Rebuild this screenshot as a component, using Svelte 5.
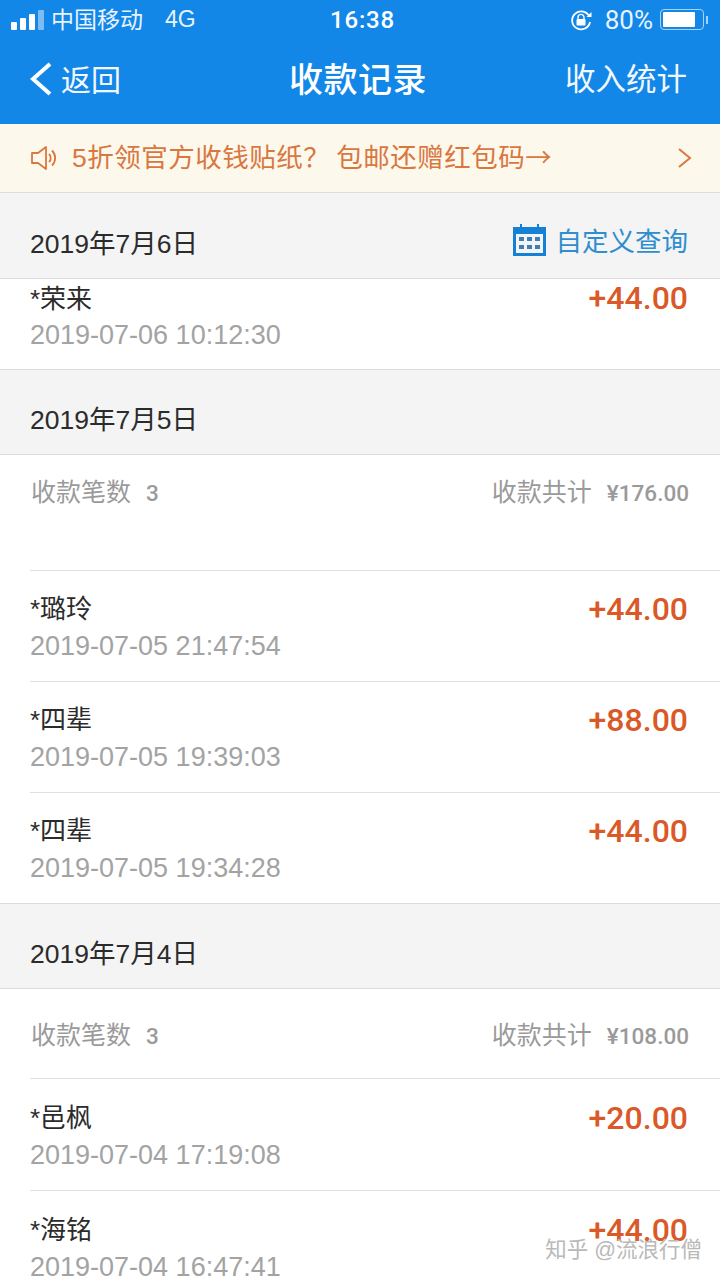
<script>
	const sections = [
		{
			date: '2019年7月6日',
			first: true,
			rows: [{ name: '*荣来', time: '2019-07-06 10:12:30', amount: '+44.00', cut: true }]
		},
		{
			date: '2019年7月5日',
			count: 3,
			total: '¥176.00',
			tall: true,
			rows: [
				{ name: '*璐玲', time: '2019-07-05 21:47:54', amount: '+44.00' },
				{ name: '*四辈', time: '2019-07-05 19:39:03', amount: '+88.00' },
				{ name: '*四辈', time: '2019-07-05 19:34:28', amount: '+44.00' }
			]
		},
		{
			date: '2019年7月4日',
			count: 3,
			total: '¥108.00',
			loose: true,
			rows: [
				{ name: '*邑枫', time: '2019-07-04 17:19:08', amount: '+20.00' },
				{ name: '*海铭', time: '2019-07-04 16:47:41', amount: '+44.00' }
			]
		}
	];
</script>

<div class="page">
	<header class="top">
		<div class="status">
			<div class="carrier">
				<span class="signal"><i></i><i></i><i></i><i class="off"></i></span>
				<span class="isp">中国移动</span>
				<span class="net">4G</span>
			</div>
			<div class="clock">16:38</div>
			<div class="power">
				<svg width="22" height="22" viewBox="0 0 22 22" fill="none" stroke="#fff">
					<path d="M19.500 8A9 9 0 1 0 20 13" stroke-width="1.8" />
					<path d="M16.500 8h5V3" fill="#fff" stroke="none" />
					<path d="M8 10V8.400a3 3 0 0 1 6 0V10" stroke-width="1.400" />
					<rect x="6.500" y="10" width="9" height="6.500" rx="1" fill="#fff" stroke="none" />
				</svg>
				<span class="pct">80%</span>
				<span class="battery"><b></b></span>
				<span class="nub"></span>
			</div>
		</div>
		<nav class="nav">
			<div class="back">
				<svg width="24" height="34" viewBox="0 0 24 34" fill="none" stroke="#fff" stroke-width="4">
					<path d="M21 2 4 17l17 15" />
				</svg>
				<span>返回</span>
			</div>
			<div class="title">收款记录</div>
			<div class="stats">收入统计</div>
		</nav>
	</header>

	<div class="notice">
		<svg width="28" height="28" viewBox="0 0 28 28" fill="none" stroke="#d9773f" stroke-width="1.800">
			<path d="M2 9h6l8-6v22l-8-6H2z" stroke-linejoin="round" />
			<path d="M19 10a5.500 5.500 0 0 1 0 8" />
			<path d="M22 6.500a10.500 10.500 0 0 1 0 15" />
		</svg>
		<span class="notice-text">5折领官方收钱贴纸<span class="ask">？</span>包邮还赠红包码<span class="arrow">→</span></span>
		<svg class="chev" width="16" height="22" viewBox="0 0 16 22" fill="none" stroke="#d9773f" stroke-width="2">
			<path d="m2 2 11 9-11 9" />
		</svg>
	</div>

	{#each sections as s}
		<section>
			<div class="day" class:first={s.first}>
				<span>{s.date}</span>
				{#if s.first}
					<div class="query">
						<svg width="33" height="32" viewBox="0 0 33 32">
							<path fill="#1581d6" d="M0 3h7V0h2v3h15V0h2v3h7v29H0z" />
							<rect x="3" y="10" width="27" height="19" fill="#f4f4f4" />
							<g fill="#3f7fb8">
								<rect x="6" y="13" width="5" height="4" /><rect x="14" y="13" width="5" height="4" /><rect x="22" y="13" width="5" height="4" />
								<rect x="6" y="21" width="5" height="4" /><rect x="14" y="21" width="5" height="4" /><rect x="22" y="21" width="5" height="4" />
							</g>
						</svg>
						<span class="query-text">自定义查询</span>
					</div>
				{/if}
			</div>
			<div class="list">
				{#if s.count}
					<div class="summary" class:tall={s.tall}>
						<span>收款笔数<em class="num">{s.count}</em></span>
						<span>收款共计<em class="num">{s.total}</em></span>
					</div>
				{/if}
				{#each s.rows as r}
					<div class="row" class:cut={r.cut} class:loose={s.loose}>
						<div class="who">
							<div class="name">{r.name}</div>
							<div class="time">{r.time}</div>
						</div>
						<div class="amount">{r.amount}</div>
					</div>
				{/each}
			</div>
		</section>
	{/each}

	<div class="mark">知乎 @流浪行僧</div>
</div>

<style>
	:global(body) {
		margin: 0;
		background: #fff;
	}
	.page {
		position: relative;
		width: 720px;
		height: 1281px;
		overflow: hidden;
		font-family: 'Liberation Sans', 'Noto Sans CJK SC', sans-serif;
		color: #2b2b2b;
	}
	.top {
		height: 124px;
		background: #1287e8;
		color: #fff;
	}
	.status {
		height: 39px;
		display: grid;
		grid-template-columns: 1fr auto 1fr;
		align-items: center;
		padding: 0 12px 0 11px;
		font-size: 23px;
		color: #e8f3fd;
	}
	.carrier {
		display: flex;
		align-items: center;
		gap: 6px;
	}
	.isp {
		margin-top: -3px;
	}
	.net {
		margin-left: 16px;
	}
	.signal {
		display: flex;
		align-items: flex-end;
		gap: 3px;
		height: 20px;
		margin-right: 1px;
	}
	.signal i {
		width: 6px;
		background: #fff;
		border-radius: 1px;
		height: 8px;
	}
	.signal i:nth-child(2) {
		height: 12px;
	}
	.signal i:nth-child(3) {
		height: 16px;
	}
	.signal i.off {
		height: 20px;
		background: #7cbcf2;
	}
	.clock {
		margin-left: 6px;
		font-size: 24px;
		font-weight: 500;
		letter-spacing: 0.8px;
		color: #fff;
		font-family: Roboto, sans-serif;
	}
	.power {
		display: flex;
		align-items: center;
		justify-content: flex-end;
	}
	.pct {
		margin-left: 13px;
		font-size: 26px;
		font-family: Roboto, sans-serif;
	}
	.battery {
		box-sizing: border-box;
		width: 44px;
		height: 21px;
		margin-left: 7px;
		border: 1px solid #a6d3f7;
		border-radius: 4px;
		padding: 2px;
		display: block;
	}
	.battery b {
		display: block;
		width: 32px;
		height: 100%;
		background: #fff;
		border-radius: 1px;
	}
	.nub {
		width: 2px;
		height: 8px;
		margin-left: 2px;
		background: #a6d3f7;
	}
	.nav {
		height: 85px;
		display: grid;
		grid-template-columns: 1fr auto 1fr;
		align-items: center;
		padding: 0 33px 8px 29px;
		box-sizing: border-box;
	}
	.back {
		display: flex;
		align-items: center;
		gap: 8px;
		font-size: 30px;
		color: #f2f8fe;
	}
	.back svg {
		margin-top: 3px;
	}
	.title {
		font-size: 34px;
		font-weight: 500;
		letter-spacing: 0.5px;
	}
	.stats {
		text-align: right;
		font-size: 30.500px;
		color: #f2f8fe;
		margin-top: -2px;
	}
	.notice {
		height: 69px;
		box-sizing: border-box;
		display: flex;
		align-items: center;
		padding: 0 27px 0 30px;
		background: #fdf8ec;
		border-bottom: 1px solid #dddddd;
		color: #d9773f;
	}
	.notice-text {
		flex: 1;
		margin: -5px 0 0 14px;
		font-size: 26.500px;
		letter-spacing: 0.5px;
	}
	.ask {
		margin-right: 6px;
	}
	.arrow {
		font-family: 'Noto Sans CJK SC', sans-serif;
	}
	.day {
		height: 85px;
		box-sizing: border-box;
		display: flex;
		align-items: center;
		justify-content: space-between;
		padding: 11px 32px 0 30px;
		background: #f4f4f4;
		border-bottom: 1px solid #dcdcdc;
		font-size: 26.500px;
	}
	.day.first {
		height: 86px;
	}
	.query {
		display: flex;
		align-items: center;
		gap: 10px;
		color: #2f8ecf;
		margin-top: -2px;
	}
	.query-text {
		margin-top: -2px;
	}
	.list {
		background: #fff;
		border-bottom: 1px solid #dcdcdc;
	}
	.summary {
		height: 90px;
		box-sizing: border-box;
		margin-left: 30px;
		padding: 0 31px 2px 1px;
		display: flex;
		justify-content: space-between;
		align-items: center;
		border-bottom: 1px solid #e0e0e0;
		font-size: 25px;
		color: #9a9a9a;
	}
	.summary.tall {
		height: 116px;
		padding-bottom: 46px;
	}
	.num {
		margin-left: 15px;
		font-family: Roboto, sans-serif;
		font-style: normal;
		font-size: 22.500px;
		font-weight: 500;
		color: #9a9a9a;
	}
	.row {
		height: 111px;
		box-sizing: border-box;
		margin-left: 30px;
		padding: 20px 32px 0 0;
		display: flex;
		justify-content: space-between;
		align-items: flex-start;
		border-bottom: 1px solid #e0e0e0;
	}
	.row:last-child {
		height: 110px;
		border-bottom: 0;
	}
	.row.loose {
		height: 112px;
		padding-top: 21px;
	}
	.row.cut {
		height: 90px;
		padding-top: 2px;
	}
	.name {
		font-size: 26px;
		line-height: 36px;
	}
	.time {
		margin-top: 1px;
		font-size: 27px;
		line-height: 36px;
		color: #a3a3a3;
	}
	.row.cut .time {
		margin-top: 0;
	}
	.amount {
		font-family: Roboto, sans-serif;
		font-size: 32px;
		line-height: 36px;
		font-weight: 500;
		color: #d95a28;
	}
	.row.cut .amount {
		margin-top: -1px;
	}
	.mark {
		position: absolute;
		right: 18px;
		top: 1232px;
		font-size: 21.500px;
		color: #b9b9b9;
		text-shadow: 0 1px 1px #ffffff;
	}
</style>
